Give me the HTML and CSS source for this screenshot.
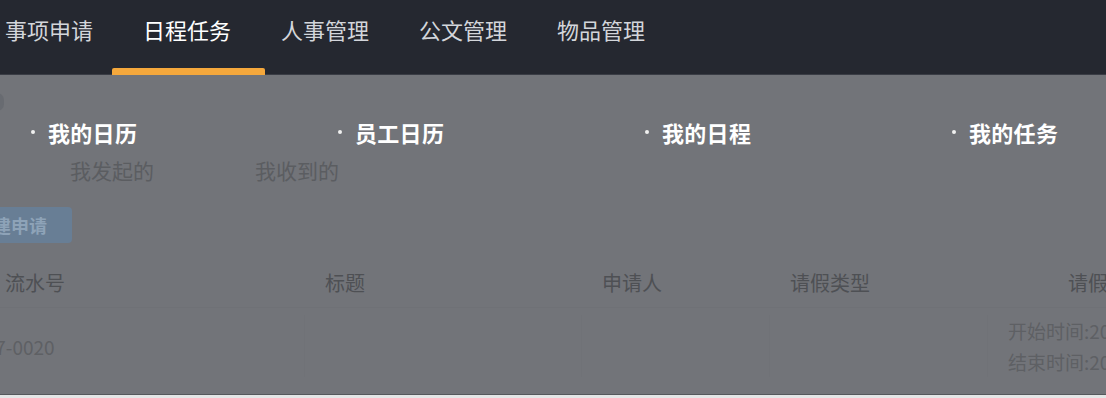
FILE: index.html
```html
<!DOCTYPE html>
<html lang="zh-CN">
<head>
<meta charset="utf-8">
<title>日程任务</title>
<link rel="stylesheet" href="styles.css">
</head>
<body>
<div class="page">
  <nav class="topnav">
    <a class="tab">事项申请</a>
    <a class="tab active">日程任务</a>
    <a class="tab">人事管理</a>
    <a class="tab">公文管理</a>
    <a class="tab">物品管理</a>
  </nav>
  <main class="main">
    <div class="handle"></div>
    <ul class="menu">
      <li class="menu-item"><span class="dot"></span>我的日历</li>
      <li class="menu-item"><span class="dot"></span>员工日历</li>
      <li class="menu-item"><span class="dot"></span>我的日程</li>
      <li class="menu-item"><span class="dot"></span>我的任务</li>
    </ul>
    <div class="subtabs">
      <span class="subtab">我发起的</span>
      <span class="subtab">我收到的</span>
    </div>
    <button class="btn">新建申请</button>
    <div class="table">
      <div class="row head">
        <div class="cell c1">流水号</div>
        <div class="cell c2">标题</div>
        <div class="cell c3">申请人</div>
        <div class="cell c4">请假类型</div>
        <div class="cell c5 h5">请假时间</div>
      </div>
      <div class="row body">
        <div class="cell c1"><span class="serial">2023-07-0020</span></div>
        <div class="cell c2"></div>
        <div class="cell c3"></div>
        <div class="cell c4"></div>
        <div class="cell c5 times">
          <div>开始时间:2023-07-03 09:00</div>
          <div>结束时间:2023-07-04 18:00</div>
        </div>
      </div>
    </div>
  </main>
  <div class="bottom-line"></div>
</div>
</body>
</html>
```

FILE: styles.css
```css
* { box-sizing: border-box; }
html, body {
  margin: 0;
  padding: 0;
  width: 1106px;
  height: 398px;
  overflow: hidden;
  background: #e4e6e6;
  font-family: "Noto Sans CJK SC", "Noto Sans", sans-serif;
}
.page {
  width: 1106px;
  overflow: hidden;
}
.topnav {
  display: flex;
  height: 75px;
  background: #252830;
  border-bottom: 1px solid #3a3d45;
  margin-left: -20px;
}
.tab {
  position: relative;
  padding: 0 25px;
  font-size: 22px;
  line-height: 58px;
  color: #d3d6db;
  white-space: nowrap;
}
.tab.active {
  color: #ffffff;
}
.tab.active::after {
  content: "";
  position: absolute;
  left: -6px;
  right: -9px;
  bottom: -1px;
  height: 7px;
  border-radius: 2px 2px 0 0;
  background: #f5a83c;
}
.main {
  position: relative;
  height: 319px;
  background: #727479;
  padding-top: 42px;
  overflow: hidden;
}
.handle {
  position: absolute;
  left: -10px;
  top: 18px;
  width: 14px;
  height: 18px;
  border-radius: 7px;
  background: #686b71;
}
.menu {
  list-style: none;
  margin: 0;
  padding: 0 0 0 31px;
  display: grid;
  grid-template-columns: repeat(4, 307px);
  line-height: 30px;
}
.menu-item {
  display: flex;
  align-items: center;
  font-size: 22px;
  font-weight: 700;
  color: #ffffff;
  letter-spacing: 0.3px;
}
.dot {
  width: 4px;
  height: 4px;
  border-radius: 50%;
  background: #f0f0f0;
  margin-right: 13px;
}
.subtabs {
  display: flex;
  gap: 101px;
  margin-top: 8px;
  padding-left: 70px;
  line-height: 30px;
  font-size: 21px;
  color: #5b5d61;
}
.btn {
  display: block;
  margin: 22px 0 0 -50px;
  height: 36px;
  padding: 0 25px;
  border: none;
  border-radius: 4px;
  background: #687e95;
  color: #8ea3b8;
  font-family: inherit;
  font-size: 18px;
  font-weight: 700;
  line-height: 36px;
}
.table {
  margin: 15px 0 0 -15px;
}
.row {
  display: grid;
  grid-template-columns: 320px 277px 188px 218px 1fr;
}
.head {
  height: 50px;
  align-items: center;
  font-size: 20px;
  color: #4e5054;
  border-bottom: 1px solid #6f7176;
}
.cell {
  padding-left: 20px;
  white-space: nowrap;
  overflow: hidden;
}
.head .cell.h5 {
  padding-left: 80px;
}
.body {
  align-items: center;
  font-size: 19px;
  color: #5e6064;
  padding: 7px 0;
}
.body .cell {
  border-right: 1px solid #707277;
  height: 62px;
  display: flex;
  align-items: center;
}
.body .cell.c5 { border-right: none; }
.serial {
  display: block;
  margin-left: -69px;
}
.times {
  flex-direction: column;
  align-items: flex-start !important;
  justify-content: center;
  line-height: 31px;
}
.bottom-line {
  height: 1px;
  background: #55585c;
}
```
